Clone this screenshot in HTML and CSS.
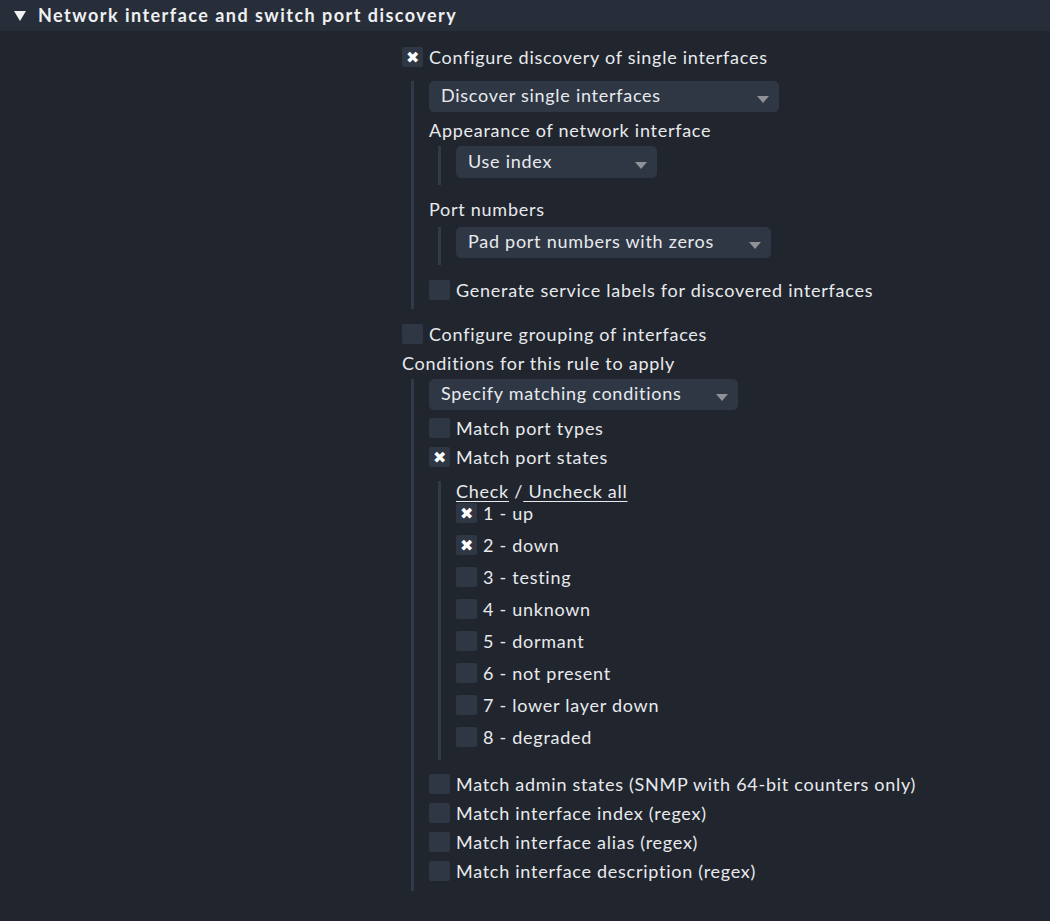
FILE: index.html
```html
<!DOCTYPE html>
<html>
<head>
<meta charset="utf-8">
<link rel="stylesheet" href="styles.css">
</head>
<body>
<div class="header"><span class="tri"></span><span class="htitle">Network interface and switch port discovery</span></div>
<div class="main">
  <div class="row r1"><span class="cb on">&#10006;</span><span class="lbl">Configure discovery of single interfaces</span></div>
  <div class="nest n-a">
    <div class="select w350"><span>Discover single interfaces</span><span class="arrow"></span></div>
    <div class="title t-app">Appearance of network interface</div>
    <div class="nest n-b">
      <div class="select w201"><span>Use index</span><span class="arrow"></span></div>
    </div>
    <div class="title t-port">Port numbers</div>
    <div class="nest n-c">
      <div class="select w315"><span>Pad port numbers with zeros</span><span class="arrow"></span></div>
    </div>
    <div class="row r-gen"><span class="cb"></span><span class="lbl">Generate service labels for discovered interfaces</span></div>
  </div>
  <div class="row r-group"><span class="cb"></span><span class="lbl">Configure grouping of interfaces</span></div>
  <div class="title t-cond">Conditions for this rule to apply</div>
  <div class="nest n-d">
    <div class="select w309"><span>Specify matching conditions</span><span class="arrow"></span></div>
    <div class="row r-types"><span class="cb"></span><span class="lbl">Match port types</span></div>
    <div class="row r-states"><span class="cb on">&#10006;</span><span class="lbl">Match port states</span></div>
    <div class="nest n-e">
      <div class="checkall"><a class="link">Check</a> /<a class="link"> Uncheck all</a></div>
      <div class="row r-list r-first"><span class="cb on">&#10006;</span><span class="lbl">1 - up</span></div>
      <div class="row r-list"><span class="cb on">&#10006;</span><span class="lbl">2 - down</span></div>
      <div class="row r-list"><span class="cb"></span><span class="lbl">3 - testing</span></div>
      <div class="row r-list"><span class="cb"></span><span class="lbl">4 - unknown</span></div>
      <div class="row r-list"><span class="cb"></span><span class="lbl">5 - dormant</span></div>
      <div class="row r-list"><span class="cb"></span><span class="lbl">6 - not present</span></div>
      <div class="row r-list"><span class="cb"></span><span class="lbl">7 - lower layer down</span></div>
      <div class="row r-list"><span class="cb"></span><span class="lbl">8 - degraded</span></div>
    </div>
    <div class="row r-match r-admin"><span class="cb"></span><span class="lbl">Match admin states (SNMP with 64-bit counters only)</span></div>
    <div class="row r-match"><span class="cb"></span><span class="lbl">Match interface index (regex)</span></div>
    <div class="row r-match"><span class="cb"></span><span class="lbl">Match interface alias (regex)</span></div>
    <div class="row r-match"><span class="cb"></span><span class="lbl">Match interface description (regex)</span></div>
  </div>
</div>
</body>
</html>
```
FILE: styles.css
```css
body{margin:0;background:#21252e;font-family:Lato,"Open Sans",sans-serif;color:#e8eaed;font-size:18px;letter-spacing:0.73px;}
.header{height:31px;background:#282e39;display:flex;align-items:center;}
.tri{width:0;height:0;border-left:6px solid transparent;border-right:6px solid transparent;border-top:10px solid #f0f0f0;margin-left:14px;margin-right:12px;margin-top:1px}
.htitle{font-weight:bold;font-size:18px;letter-spacing:1.47px;color:#eef0f2;line-height:20px;margin-top:-1px}
.main{padding-left:402px;padding-top:16px;display:flex;flex-direction:column;align-items:flex-start}
.row{display:flex;align-items:center;height:20px;line-height:20px}
.cb{width:21px;height:20px;background:#2f3745;border-radius:2px;display:inline-flex;align-items:center;justify-content:center;font-size:16px;line-height:20px;color:#fff;margin-right:6px;flex:none;letter-spacing:0}
.lbl{white-space:nowrap}
.title{line-height:20px;height:20px;white-space:nowrap}
.nest{display:flex;flex-direction:column;align-items:flex-start;margin-left:9px;border-left:3px solid #323a47;padding-left:15px}
.select{height:31px;background:#2f3745;border-radius:5px;display:flex;align-items:center;justify-content:space-between;padding:0 10px 3px 12px;box-sizing:border-box;white-space:nowrap;line-height:20px}
.arrow{width:0;height:0;border-left:6px solid transparent;border-right:6px solid transparent;border-top:7px solid #8e9196;margin-top:9px}
.w350{width:350px}
.w201{width:201px}
.w315{width:315px}
.w309{width:309px}
.n-a{margin-top:14px;padding-bottom:9px}
.t-app{margin-top:8px}
.n-b{margin-top:6px;padding-bottom:7px}
.n-b .select{height:32px}
.t-port{margin-top:14px}
.n-c{margin-top:8px;padding-bottom:7px}
.r-gen{margin-top:15px}
.r-group{margin-top:15px}
.t-cond{margin-top:9px}
.n-d{margin-top:6px;padding-bottom:10px}
.r-types{margin-top:8px}
.r-states{margin-top:9px}
.n-e{margin-top:14px;padding-bottom:13px}
.checkall{line-height:20px;height:20px;white-space:nowrap}
.link{text-decoration:underline;text-underline-offset:3px;color:#e8eaed}
.r-list{margin-top:12px}
.r-list.r-first{margin-top:2px}
.r-match{margin-top:9px}
.r-admin{margin-top:14px}
```
